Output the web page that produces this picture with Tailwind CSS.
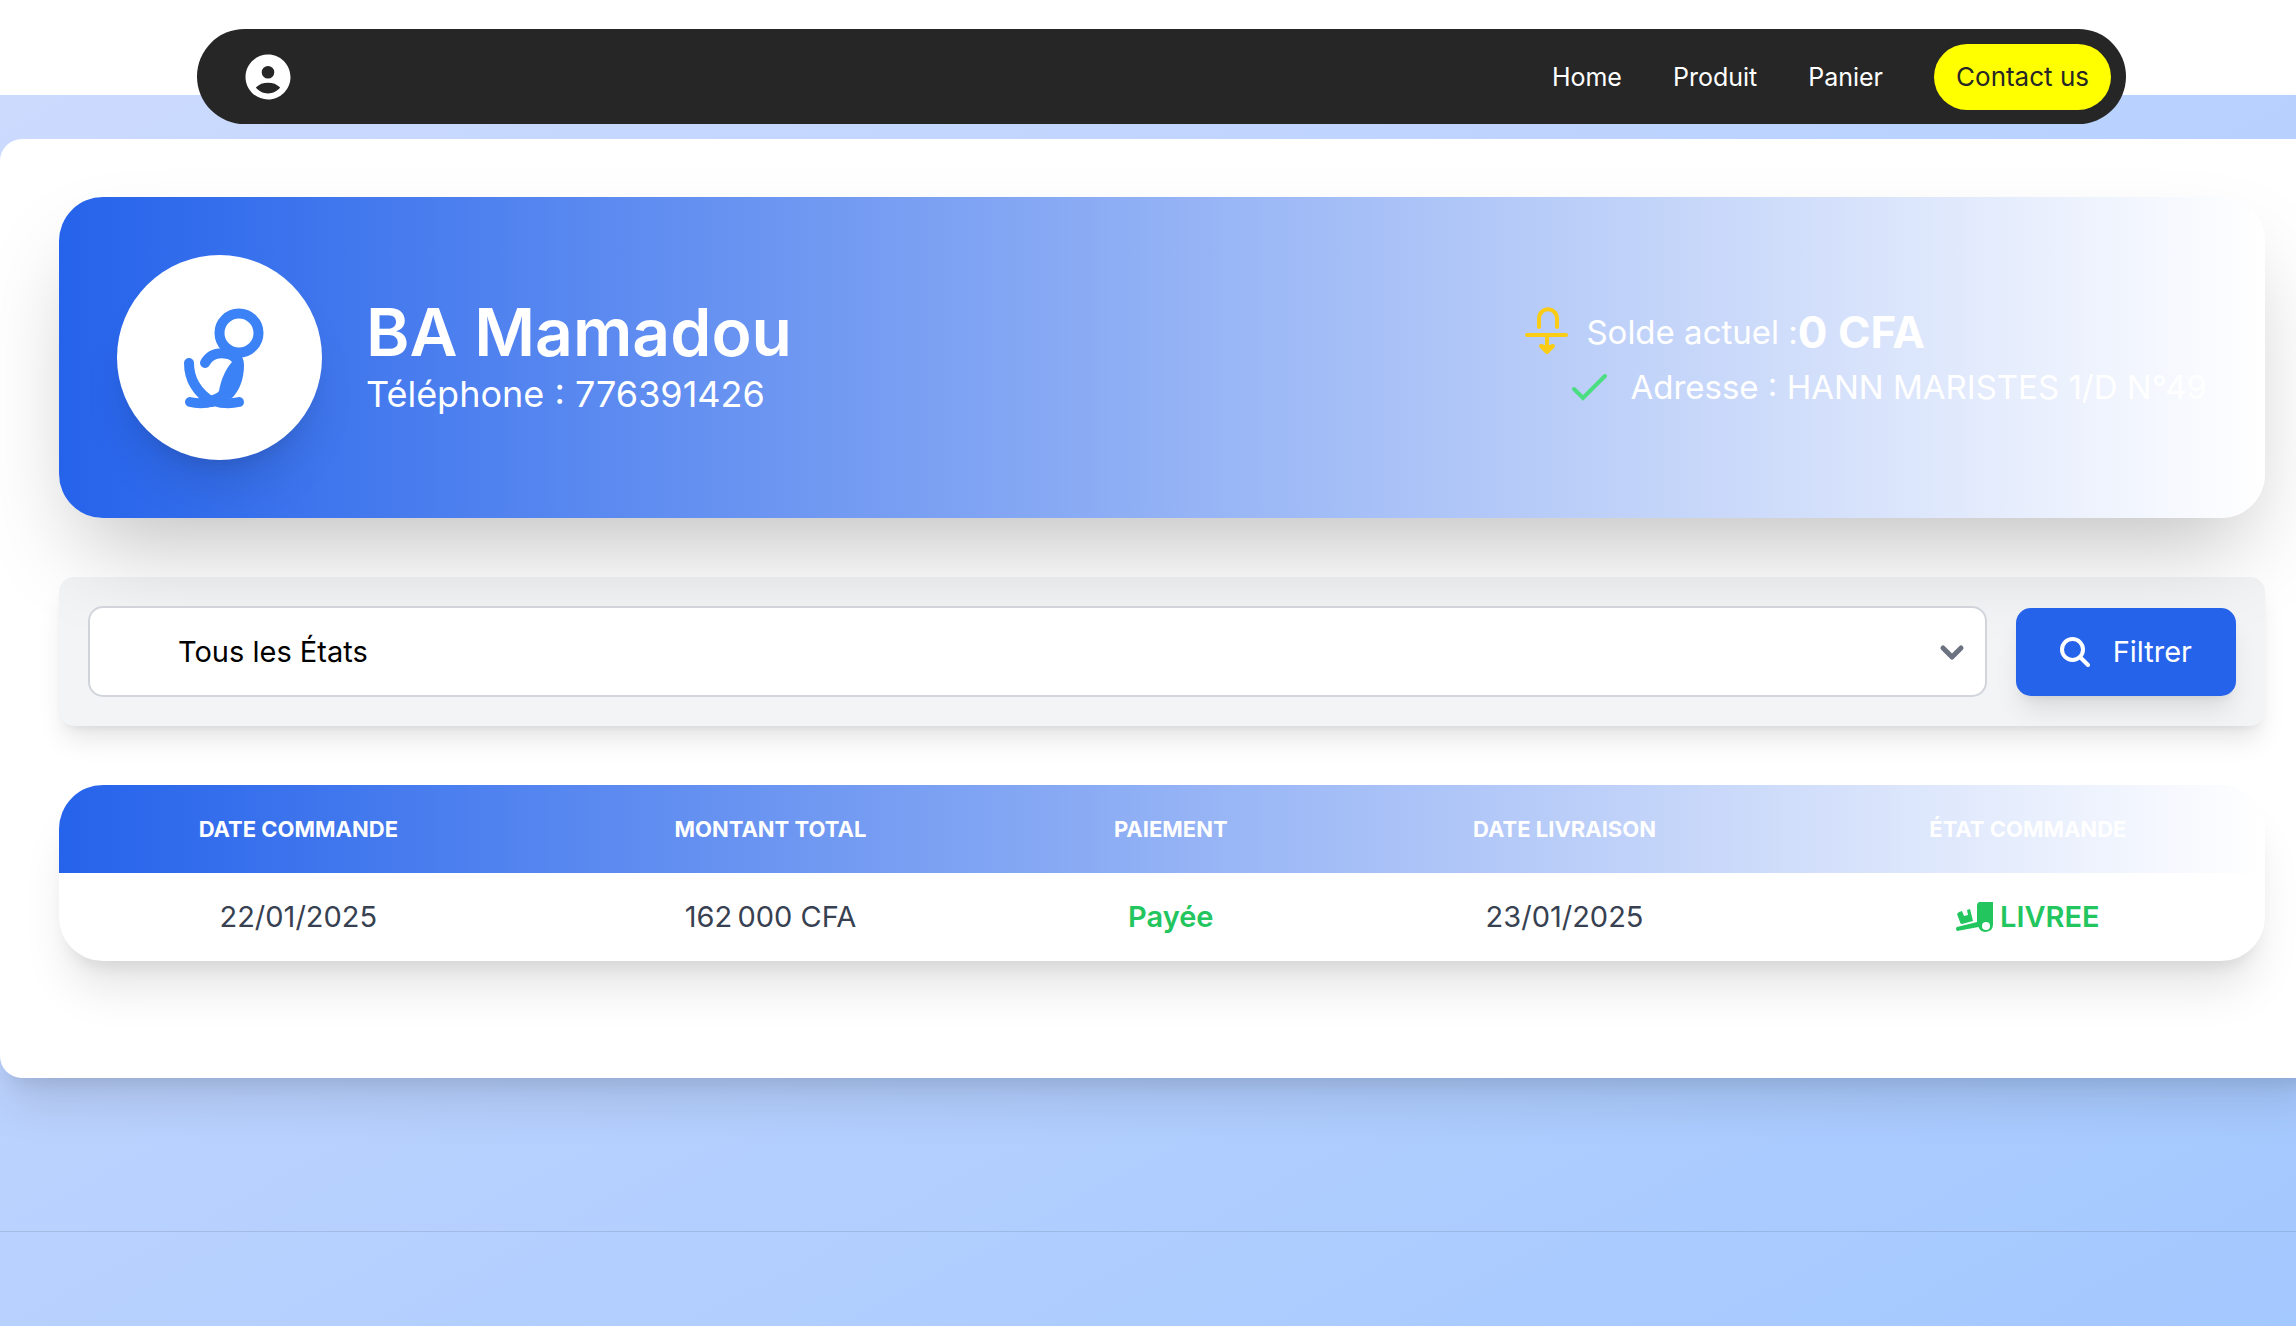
<!DOCTYPE html>
<html lang="fr">
<head>
<meta charset="utf-8">
<meta name="viewport" content="width=device-width, initial-scale=1">
<title>Mon compte</title>
<script src="https://cdn.jsdelivr.net/npm/@tailwindcss/browser@4"></script>
</head>
<body class="flex min-h-screen flex-col overflow-hidden bg-white font-['Inter',sans-serif] antialiased">
<header class="relative z-10 -mb-[29px] pt-[29px] pr-[170px] pl-[197px]">
  <nav class="flex h-[95px] items-center justify-between rounded-full bg-[#262626] pr-[15px] pl-[44px] text-[25px] leading-[40px] text-white">
    <a href="#" aria-label="Profil">
      <svg class="size-[54px]" viewBox="0 0 24 24" fill="currentColor"><path d="M12 2C6.48 2 2 6.48 2 12s4.480 10 10 10 10-4.480 10-10S17.520 2 12 2zm0 5.100a2.800 2.800 0 1 1 0 5.600 2.800 2.800 0 0 1 0-5.600zm0 12.200c-2.200 0-4.300-1.100-5.400-2.600 1.400-1.600 3.300-2.200 5.400-2.200s4 .6 5.400 2.200c-1.100 1.500-3.200 2.600-5.400 2.600z"/></svg>
    </a>
    <div class="flex items-center gap-[51px]">
      <a href="#">Home</a>
      <a href="#">Produit</a>
      <a href="#">Panier</a>
      <a href="#" class="rounded-full bg-[#ffff00] px-[22px] py-[13px] text-[26px] text-[#262626]">Contact us</a>
    </div>
  </nav>
</header>
<main class="flex-1 bg-linear-to-br/srgb from-[#ccdafe] to-[#a3c8ff] pt-[44px]">
  <div class="w-[calc(100%+28px)] rounded-[22px] bg-white px-[59px] pt-[58px] pb-[117px] shadow-[0_36px_46px_-9px_rgba(0,0,0,0.1),0_15px_18px_-11px_rgba(0,0,0,0.1)]">
    <section class="relative flex items-center justify-between rounded-[44px] bg-linear-to-r/srgb from-[#2563eb] to-white p-[58px] text-white shadow-[0_46px_92px_-22px_rgba(0,0,0,0.25)]">
      <div class="flex items-center gap-[44px]">
        <div class="flex size-[205px] items-center justify-center rounded-full bg-white shadow-[0_36px_46px_-9px_rgba(0,0,0,0.1),0_15px_18px_-11px_rgba(0,0,0,0.1)]">
          <svg class="h-[140px] w-[120px] text-[#3b82f6]" viewBox="0 -2 120 140" fill="none" stroke="currentColor" stroke-width="10" stroke-linecap="round" stroke-linejoin="round"><circle cx="79" cy="43" r="19.500"/><path d="M45 73C50 64 58 61 73 65M29 73C29 90 38 103 52 112M30 112Q42 115 54 111M54 111Q66 115 79 112"/><path fill="currentColor" stroke="none" d="M60 62H78Q84 67 84 75C84 90 79 101 72 108L54 112 49 106Q57 104 59 101C61 90 65 80 72 72Q69 68 60 67Z"/></svg>
        </div>
        <div>
          <h1 class="text-[66px] leading-[73px] font-semibold">BA Mamadou</h1>
          <p class="text-[36px] leading-[51px]">Téléphone : 776391426</p>
        </div>
      </div>
      <div class="pt-[4px] text-[33px] leading-[51px]">
        <p class="flex items-center">
          <svg class="mr-[18px] h-[51px] w-[44px] text-[#facc15]" viewBox="0 0 44 51" fill="none" stroke="currentColor" stroke-width="4" stroke-linecap="round" stroke-linejoin="round"><path d="M15 20V12C15 -1 33 -1 33 12V20M3 28H42M23 29V42"/><path fill="currentColor" d="M17 39L23 45 29 39 23 41Z"/></svg>
          Solde actuel :<strong class="text-[44px] font-bold">0 CFA</strong>
        </p>
        <p class="mt-[4px] flex items-center pl-[44px]">
          <svg class="mr-[18px] h-[51px] w-[44px] text-[#4ade80]" viewBox="0 0 44 51" fill="none" stroke="currentColor" stroke-width="4" stroke-linecap="round"><path d="M6 27L15 36 37 14"/></svg>
          Adresse : HANN MARISTES 1/D N°49
        </p>
      </div>
    </section>
    <form class="mt-[59px] flex items-center gap-[29px] rounded-[15px] bg-[#f3f4f6] p-[29px] shadow-[0_18px_27px_-5px_rgba(0,0,0,0.1),0_7px_11px_-7px_rgba(0,0,0,0.1)]">
      <div class="relative flex-1">
        <select aria-label="État de la commande" class="block h-[91px] w-full appearance-none rounded-[15px] border-2 border-[#d1d5db] bg-white pr-[60px] pl-[88px] text-[29px] text-black"><option>Tous les États</option></select>
        <svg class="pointer-events-none absolute top-[30px] right-[18px] size-[32px] text-[#6b7280]" viewBox="0 0 32 32" fill="none" stroke="currentColor" stroke-width="5" stroke-linecap="round" stroke-linejoin="round"><path d="M6 12L15 21 24 12"/></svg>
      </div>
      <button type="button" class="relative flex h-[88px] items-center gap-[23px] rounded-[15px] bg-[#2563eb] px-[44px] text-[29px] text-white shadow-[0_18px_27px_-5px_rgba(0,0,0,0.1),0_7px_11px_-7px_rgba(0,0,0,0.1)]">
        <svg class="size-[30px]" viewBox="0 0 30 30" fill="none" stroke="currentColor" stroke-width="4" stroke-linecap="round"><circle cx="12.500" cy="12.500" r="10.500"/><path d="M20 20L28 28"/></svg>
        Filtrer
      </button>
    </form>
    <div class="mt-[59px] overflow-hidden rounded-[44px] bg-white shadow-[0_36px_46px_-9px_rgba(0,0,0,0.1),0_15px_18px_-11px_rgba(0,0,0,0.1)]">
      <table class="w-full text-center text-[29px] leading-[44px] text-[#374151]">
        <thead class="bg-linear-to-r/srgb from-[#2563eb] to-white text-[22px] text-white uppercase">
          <tr class="h-[88px]"><th class="w-[21.700%] font-bold">Date Commande</th><th class="w-[21.100%] font-bold">Montant Total</th><th class="w-[15.200%] font-bold">Paiement</th><th class="w-[20.500%] font-bold">Date Livraison</th><th class="font-bold">État Commande</th></tr>
        </thead>
        <tbody>
          <tr class="h-[88px]"><td>22/01/2025</td><td>162&#8239;000 CFA</td><td class="font-semibold text-[#22c55e]">Payée</td><td>23/01/2025</td>
          <td class="text-[#22c55e]"><span class="flex items-center justify-center gap-[7px] font-semibold">
            <svg class="h-[30px] w-[37px]" viewBox="0 0 37 30" fill="currentColor"><path d="M24 0H37V23A7.500 7.500 0 0 1 22.500 25L1 29Q-1 26 1 25L21 20V4Q21 0 24 0ZM30 20A4 4 0 1 0 30 28 4 4 0 1 0 30 20Z" fill-rule="evenodd"/><path d="M3 10L6 9 8 14 12 13 11 8 14 7 17 19 6 22Q4 22 4 20L1 12Z"/></svg>LIVREE</span></td></tr>
        </tbody>
      </table>
    </div>
  </div>
  <hr class="mt-[153px] border-black/10">
</main>
</body>
</html>
